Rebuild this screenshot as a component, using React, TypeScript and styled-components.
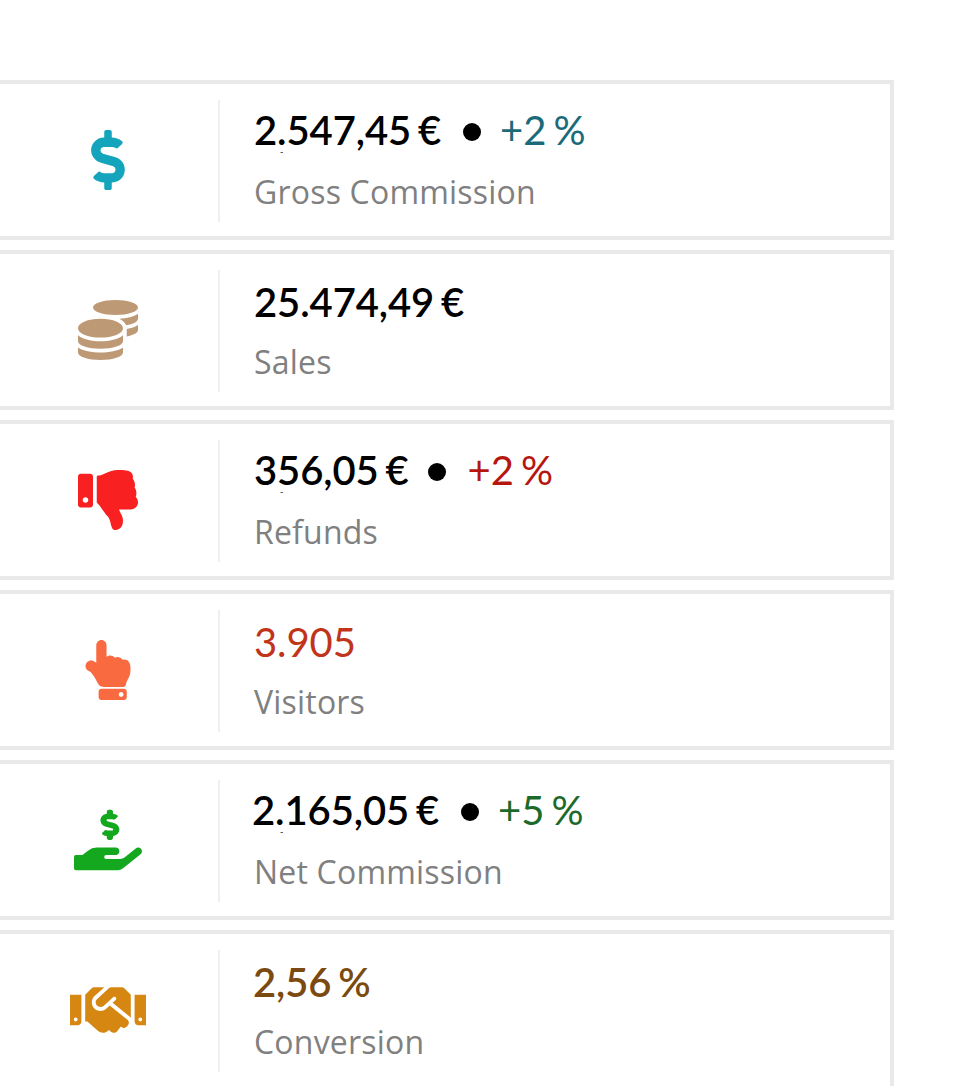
import React from 'react';
import styled, { createGlobalStyle } from 'styled-components';
import {
  FaCoins,
  FaDollarSign,
  FaHandHoldingUsd,
  FaHandPointUp,
  FaHandshake,
  FaThumbsDown,
} from 'react-icons/fa';

const GlobalStyle = createGlobalStyle`
  html, body {
    margin: 0;
    padding: 0;
    background: #fff;
    overflow: hidden;
  }
`;

const Page = styled.div`
  width: 974px;
  height: 1086px;
  overflow: hidden;
  padding: 80px 80px 0 0;
  box-sizing: border-box;
  display: flex;
  flex-direction: column;
  gap: 10px;
`;

const Card = styled.div`
  flex: none;
  height: 160px;
  box-sizing: border-box;
  border: 4px solid #e9e9e9;
  border-left: 0;
  padding: 16px 0 14px;
  display: flex;
`;

const IconCell = styled.div<{ $color: string; $size: number }>`
  width: 216px;
  flex: none;
  border-right: 2px solid #efefef;
  display: flex;
  align-items: center;
  justify-content: center;
  color: ${({ $color }) => $color};
  font-size: ${({ $size }) => $size}px;
  padding: 0 2px 2px 0;
`;

const Body = styled.div`
  position: relative;
  padding-left: 34px;
  display: flex;
  flex-direction: column;
`;

const ValueRow = styled.div<{ $shift: number; $drop: number }>`
  display: flex;
  align-items: baseline;
  height: ${({ $drop }) => 60 - $drop}px;
  line-height: 60px;
  margin-left: ${({ $shift }) => $shift}px;
  padding-top: ${({ $drop }) => $drop}px;
  font-family: Lato, sans-serif;
  font-size: 40px;
  letter-spacing: -0.1px;
  word-spacing: -3px;
  white-space: nowrap;
`;

const Value = styled.span<{ $color: string; $weight: number }>`
  color: ${({ $color }) => $color};
  font-weight: ${({ $weight }) => $weight};
`;

const Dot = styled.span<{ $left: number }>`
  flex: none;
  width: 18px;
  height: 18px;
  border-radius: 50%;
  background: #000;
  margin: 0 ${({ $left }) => 41 - $left}px 0 ${({ $left }) => $left}px;
  align-self: center;
  position: relative;
  top: 2px;
`;

const Change = styled.span<{ $color: string }>`
  color: ${({ $color }) => $color};
  font-weight: 400;
`;

// stray mark under the first digits in the screenshot
const Tick = styled.span`
  position: absolute;
  left: 60px;
  top: 52px;
  width: 3px;
  height: 1px;
  background: linear-gradient(90deg, #e0a050 33%, #2a5fc0 33%);
`;

const Label = styled.div`
  margin-top: 2px;
  font-family: 'Open Sans', sans-serif;
  font-size: 32px;
  letter-spacing: 0.2px;
  line-height: 60px;
  color: #808080;
  white-space: nowrap;
`;

type Stat = {
  icon: React.ReactNode;
  iconColor: string;
  iconSize: number;
  value: string;
  valueColor: string;
  weight: number;
  change?: string;
  changeColor?: string;
  dotLeft?: number;
  label: string;
  shift?: number;
};

const stats: Stat[] = [
  { icon: <FaDollarSign />, iconColor: '#14a5bd', iconSize: 60, value: '2.547,45 €', valueColor: '#000', weight: 600, change: '+2 %', changeColor: '#1a6a7a', dotLeft: 22, label: 'Gross Commission' },
  { icon: <FaCoins />, iconColor: '#bd9a75', iconSize: 60, value: '25.474,49 €', valueColor: '#000', weight: 600, label: 'Sales' },
  { icon: <FaThumbsDown />, iconColor: '#f82020', iconSize: 60, value: '356,05 €', valueColor: '#000', weight: 600, change: '+2 %', changeColor: '#b5170f', dotLeft: 19, label: 'Refunds' },
  { icon: <FaHandPointUp />, iconColor: '#f96a40', iconSize: 60, value: '3.905', valueColor: '#c0341a', weight: 400, label: 'Visitors' },
  { icon: <FaHandHoldingUsd />, iconColor: '#14a81e', iconSize: 68, value: '2.165,05 €', valueColor: '#000', weight: 600, change: '+5 %', changeColor: '#1c6a2a', dotLeft: 22, label: 'Net Commission', shift: -2 },
  { icon: <FaHandshake />, iconColor: '#d68712', iconSize: 76, value: '2,56 %', valueColor: '#7a4a10', weight: 600, label: 'Conversion', shift: -1 },
];

const App = () => (
  <Page>
    <GlobalStyle />
    {stats.map((s) => (
      <Card key={s.label}>
        <IconCell $color={s.iconColor} $size={s.iconSize}>
          {s.icon}
        </IconCell>
        <Body>
          <ValueRow $shift={s.shift ?? 0} $drop={s.change ? 0 : 2}>
            <Value $color={s.valueColor} $weight={s.weight}>
              {s.value}
            </Value>
            {s.change && (
              <>
                <Dot $left={s.dotLeft ?? 21} />
                <Change $color={s.changeColor ?? '#000'}>{s.change}</Change>
              </>
            )}
          </ValueRow>
          {s.change && <Tick />}
          <Label>{s.label}</Label>
        </Body>
      </Card>
    ))}
  </Page>
);

export default App;
